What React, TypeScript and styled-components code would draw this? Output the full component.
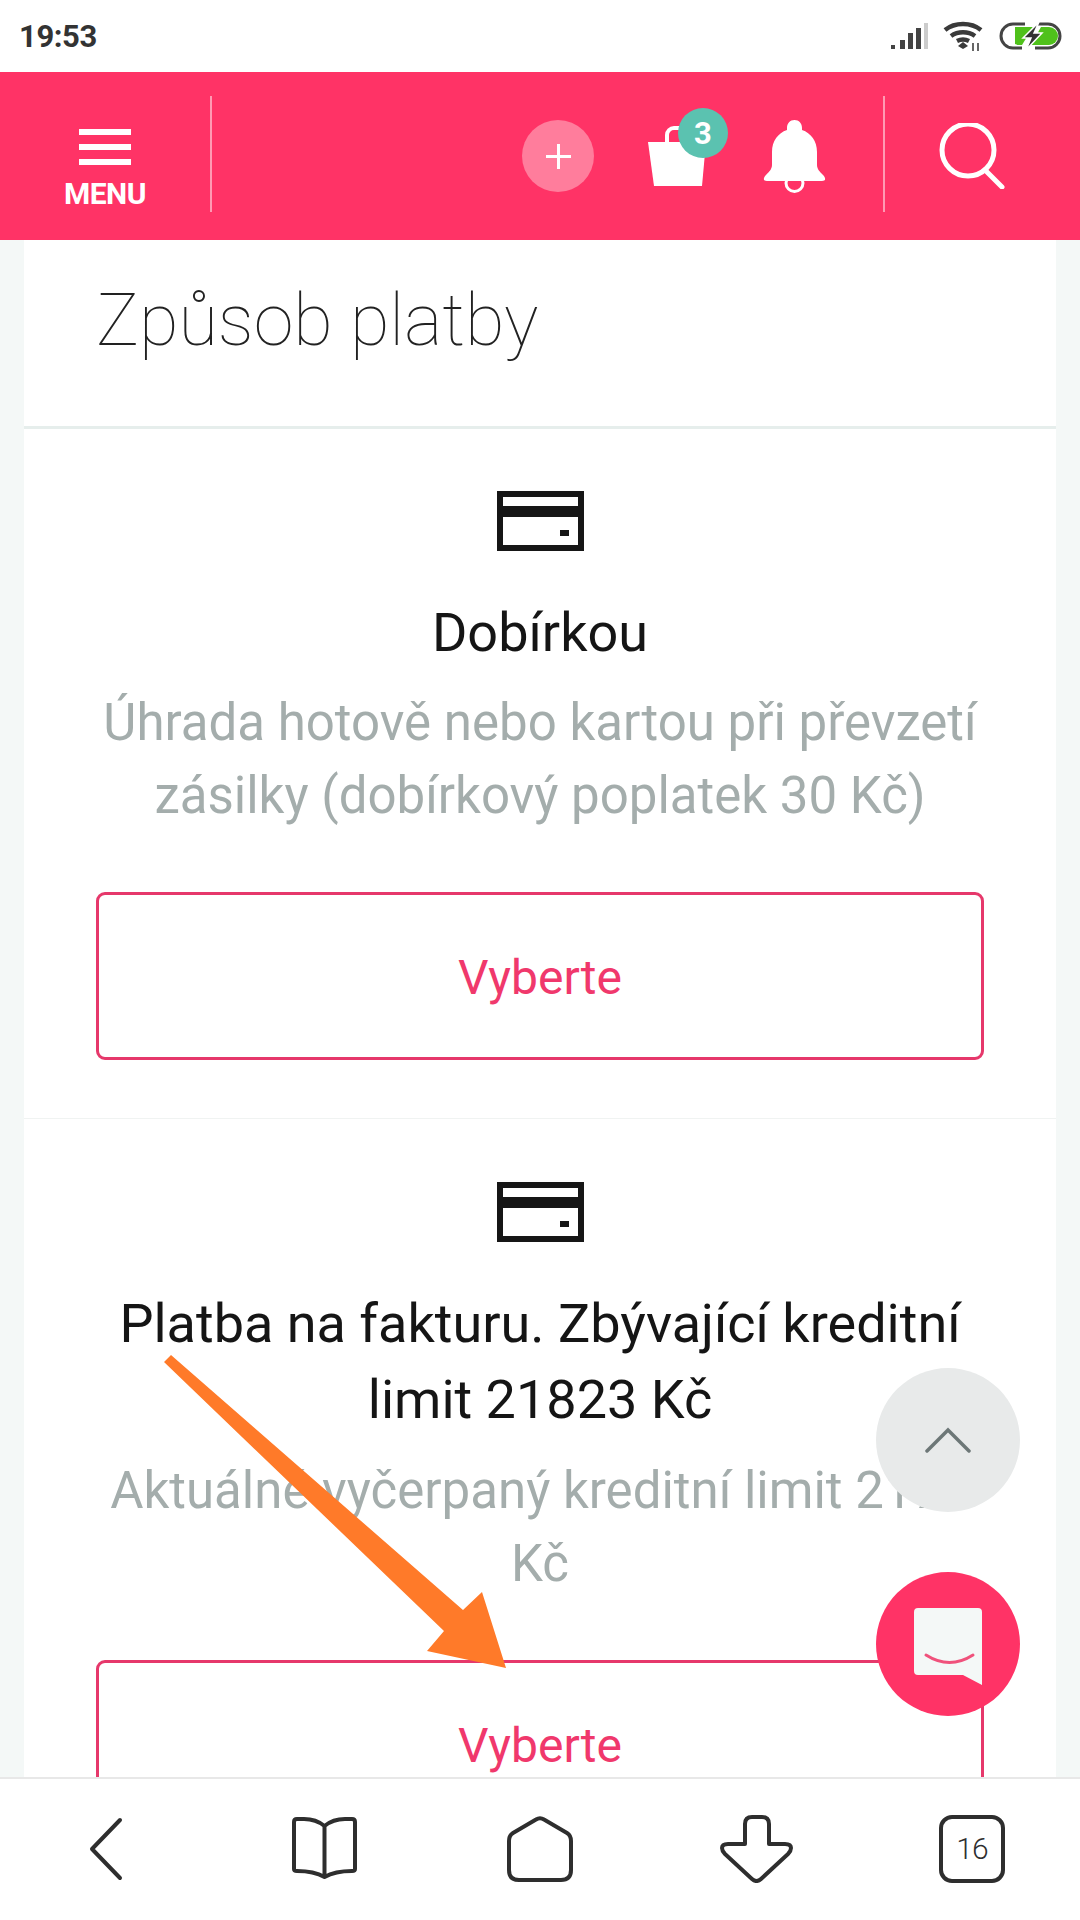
import React from "react";
import styled, { createGlobalStyle } from "styled-components";

const PINK = "#ff3366";

const GlobalStyle = createGlobalStyle`
  html, body { margin: 0; padding: 0; background: #fff; }
  * { box-sizing: border-box; }
  body { font-family: Roboto, "Noto Sans", sans-serif; }
`;

const Screen = styled.div`
  position: relative;
  width: 1080px;
  height: 1920px;
  overflow: hidden;
  display: flex;
  flex-direction: column;
  background: #f4f8f7;
`;

const StatusBar = styled.div`
  height: 72px;
  flex: none;
  background: #fff;
  display: flex;
  align-items: center;
  justify-content: space-between;
  padding: 0 17px 0 19px;
`;

const Clock = styled.span`
  font-size: 31px;
  font-weight: 700;
  color: #333;
  letter-spacing: -0.4px;
`;

const StatusIcons = styled.div`
  display: flex;
  align-items: center;
  gap: 15px;
`;

const Header = styled.header`
  height: 168px;
  flex: none;
  background: ${PINK};
  display: flex;
  align-items: center;
`;

const MenuBox = styled.div`
  width: 212px;
  height: 116px;
  flex: none;
  margin-bottom: 4px;
  border-right: 2px solid rgba(255, 255, 255, 0.5);
  display: flex;
  flex-direction: column;
  align-items: center;
  padding-top: 33px;
`;

const Burger = styled.span`
  display: block;
  width: 52px;
  height: 36px;
  flex: none;
  border-top: 6px solid #fff;
  border-bottom: 6px solid #fff;
  position: relative;
  &::after {
    content: "";
    position: absolute;
    left: 0;
    right: 0;
    top: 9px;
    height: 6px;
    background: #fff;
  }
`;

const MenuLabel = styled.span`
  margin-top: 12px;
  font-size: 30px;
  line-height: 34px;
  font-weight: 700;
  color: #fff;
  letter-spacing: -0.5px;
`;

const HeaderActions = styled.div`
  flex: 1;
  height: 116px;
  display: flex;
  align-items: center;
  padding-left: 310px;
`;

const PlusButton = styled.div`
  width: 72px;
  height: 72px;
  border-radius: 50%;
  background: #ff7d9c;
  display: flex;
  align-items: center;
  justify-content: center;
`;

const BagWrap = styled.div`
  position: relative;
  width: 58px;
  height: 60px;
  margin-left: 54px;
`;

const Badge = styled.span`
  position: absolute;
  left: 30px;
  top: -18px;
  width: 50px;
  height: 50px;
  border-radius: 50%;
  background: #5bc2b0;
  color: #fff;
  font-size: 31px;
  font-weight: 700;
  display: flex;
  align-items: center;
  justify-content: center;
`;

const BellWrap = styled.div`
  margin-left: 57px;
  display: flex;
`;

const SearchBox = styled.div`
  width: 197px;
  height: 116px;
  flex: none;
  margin-bottom: 4px;
  border-left: 2px solid rgba(255, 255, 255, 0.5);
  display: flex;
  align-items: center;
  padding: 4px 0 0 54px;
`;

const Content = styled.main`
  flex: 1;
  min-height: 0;
  overflow: hidden;
  margin: 0 24px;
  background: #fff;
`;

const PageTitle = styled.h1`
  margin: 0;
  height: 189px;
  padding: 36px 0 0 72px;
  border-bottom: 3px solid #e6eeec;
  font-size: 72px;
  line-height: 90px;
  font-weight: 100;
  color: #222;
`;

const Method = styled.section<{ $top: number }>`
  display: flex;
  flex-direction: column;
  align-items: center;
  padding: ${(p) => p.$top}px 72px 58px;
  border-bottom: 1px solid #f0f3f2;
  text-align: center;
`;

const CardIcon = styled.svg`
  display: block;
  flex: none;
`;

const MethodTitle = styled.h2`
  margin: 44px 0 0;
  font-size: 54px;
  line-height: 76px;
  font-weight: 400;
  color: #151515;
`;

const MethodText = styled.p<{ $gap: number }>`
  margin: ${(p) => p.$gap}px 0 0;
  font-size: 51px;
  line-height: 73px;
  font-weight: 400;
  color: #a4adac;
`;

const SelectButton = styled.button`
  margin-top: 60px;
  width: 888px;
  height: 168px;
  flex: none;
  padding: 2px 0 0;
  background: #fff;
  border: 3px solid #e6386b;
  border-radius: 9px;
  font-family: inherit;
  font-size: 48px;
  color: #f0386c;
`;

const BottomBar = styled.nav`
  height: 143px;
  flex: none;
  background: #fff;
  border-top: 2px solid #e8e8e8;
  padding-bottom: 2px;
  display: grid;
  grid-template-columns: repeat(5, 216px);
  align-items: center;
  justify-items: center;
`;

const BackIcon = styled.svg`
  margin-right: 4px;
`;

const FloatButton = styled.div<{ $top: number; $bg: string }>`
  position: absolute;
  left: 876px;
  top: ${(p) => p.$top}px;
  width: 144px;
  height: 144px;
  border-radius: 50%;
  background: ${(p) => p.$bg};
  display: flex;
  align-items: center;
  justify-content: center;
`;

const ChatIcon = styled.svg`
  margin-top: 5px;
`;

const ArrowOverlay = styled.svg`
  position: absolute;
  left: 0;
  top: 0;
  pointer-events: none;
`;

const TabCount = styled.text`
  font-family: Roboto, sans-serif;
  font-size: 30px;
  font-weight: 300;
  letter-spacing: -1px;
  fill: #2e2e2e;
`;

function CreditCard() {
  return (
    <CardIcon width="87" height="60" viewBox="0 0 87 60">
      <path
        fill="#161616"
        fillRule="evenodd"
        d="M0 0h87v60H0zM6 6v9h75V6zM6 26v28h75V26zM63 39h9v6h-9z"
      />
    </CardIcon>
  );
}

export default function App() {
  return (
    <Screen>
      <GlobalStyle />
      <StatusBar>
        <Clock>19:53</Clock>
        <StatusIcons>
          <svg width="38" height="28" viewBox="0 0 38 28">
            <path fill="#444" d="M1 23h4v4H1zM10 18h5v9h-5zM18 11h5v16h-5zM26 6h5v21h-5z" />
            <path fill="#ccc" d="M34 1h4v26h-4z" />
          </svg>
          <svg width="40" height="30" viewBox="0 0 40 30">
            <g fill="none" stroke="#3a3a3a" strokeWidth="4.500">
              <path d="M2 9c10-8 26-8 36 0" />
              <path d="M8 15c7-5 17-5 24 0" />
              <path d="M14 20c4-2 8-2 12 0" />
            </g>
            <path fill="#3a3a3a" d="M20 21l5 4-5 3-5-3z" />
            <path stroke="#666" strokeWidth="2" d="M30 22v8M35 22v8" />
          </svg>
          <svg width="65" height="30" viewBox="0 0 65 30">
            <path
              d="M27 3H15a12 12 0 0 0 0 24h9M40 3h10a12 12 0 0 1 0 24H37"
              fill="none"
              stroke="#444"
              strokeWidth="3"
            />
            <path fill="#4fc11b" d="M17 6h18L24 24h-3a9 9 0 0 1-4-1z" />
            <path fill="#4fc11b" d="M43 6h8a9 9 0 0 1 0 18H33z" />
            <path fill="#333" stroke="#fff" strokeWidth="1.500" d="M41 1 25 17h8l-5 12 16-17h-8z" />
          </svg>
        </StatusIcons>
      </StatusBar>

      <Header>
        <MenuBox>
          <Burger />
          <MenuLabel>MENU</MenuLabel>
        </MenuBox>
        <HeaderActions>
          <PlusButton>
            <svg width="25" height="25" viewBox="0 0 25 25">
              <path fill="#fff" d="M11 0h3v25h-3zM0 11h25v3H0z" />
            </svg>
          </PlusButton>
          <BagWrap>
            <svg width="58" height="60" viewBox="0 0 58 60">
              <path d="M19 18V9a7 7 0 0 1 7-7h10" fill="none" stroke="#fff" strokeWidth="4" />
              <path fill="#fff" d="M0 16h58l-4 44H6z" />
            </svg>
            <Badge>3</Badge>
          </BagWrap>
          <BellWrap>
            <svg width="63" height="73" viewBox="0 0 63 73">
              <circle cx="31.500" cy="63" r="8.500" fill="none" stroke="#fff" strokeWidth="3" />
              <path
                fill="#fff"
                d="M31.500 0C36 0 39 3.500 39 8v2c9 3 15 11 15 22v13c0 4 3 7 6 10s3 6-1 6H4c-4 0-4-3-1-6s6-6 6-10V32c0-11 6-19 15-22V8c0-4.500 3-8 7.500-8z"
              />
            </svg>
          </BellWrap>
        </HeaderActions>
        <SearchBox>
          <svg width="66" height="66" viewBox="0 0 66 66">
            <circle cx="29" cy="27" r="26" fill="none" stroke="#fff" strokeWidth="5" />
            <path d="M46 47l17 17" stroke="#fff" strokeWidth="5" strokeLinecap="round" />
          </svg>
        </SearchBox>
      </Header>

      <Content>
        <PageTitle>Způsob platby</PageTitle>
        <Method $top={62}>
          <CreditCard />
          <MethodTitle>Dobírkou</MethodTitle>
          <MethodText $gap={15}>
            Úhrada hotově nebo kartou při převzetí zásilky (dobírkový poplatek 30 Kč)
          </MethodText>
          <SelectButton>Vyberte</SelectButton>
        </Method>
        <Method $top={63}>
          <CreditCard />
          <MethodTitle>Platba na fakturu. Zbývající kreditní limit 21823 Kč</MethodTitle>
          <MethodText $gap={16}>Aktuálně vyčerpaný kreditní limit 2177 Kč</MethodText>
          <SelectButton>Vyberte</SelectButton>
        </Method>
      </Content>

      <BottomBar>
        <BackIcon width="34" height="64" viewBox="0 0 34 64">
          <path d="M31 3 3 32l28 29" fill="none" stroke="#2e2e2e" strokeWidth="4" strokeLinecap="round" strokeLinejoin="round" />
        </BackIcon>
        <svg width="65" height="63" viewBox="0 0 65 63">
          <path
            d="M32.500 9Q24 2 12 2H5Q2 2 2 5v47q0 2 3 2 17 0 27.500 6Q43 54 60 54q3 0 3-2V5q0-3-3-3h-7Q41 2 32.500 9zM32.500 9v51"
            fill="none"
            stroke="#2e2e2e"
            strokeWidth="4"
            strokeLinejoin="round"
          />
        </svg>
        <svg width="66" height="66" viewBox="0 0 66 66">
          <path
            d="M29 3.500Q33 1 37 3.500L60 17Q64 19.500 64 25v29Q64 64 54 64H12Q2 64 2 54V25Q2 19.500 6 17z"
            fill="none"
            stroke="#2e2e2e"
            strokeWidth="4"
            strokeLinejoin="round"
          />
        </svg>
        <svg width="73" height="68" viewBox="0 0 73 68">
          <path
            d="M25 29V9q0-7 7-7h10q7 0 7 7v20h16q6 0 6 4 0 3-3 6L41 64q-4.500 4-9 0L5 39q-3-3-3-6 0-4 6-4z"
            fill="none"
            stroke="#2e2e2e"
            strokeWidth="4"
            strokeLinejoin="round"
          />
        </svg>
        <svg width="66" height="68" viewBox="0 0 66 68">
          <rect x="2" y="2" width="62" height="64" rx="11" fill="none" stroke="#2e2e2e" strokeWidth="4" />
          <TabCount x="33" y="44" textAnchor="middle">16</TabCount>
        </svg>
      </BottomBar>

      <FloatButton $top={1368} $bg="#e8eaea">
        <svg width="46" height="26" viewBox="0 0 46 26">
          <path d="M2 24 23 3l21 21" fill="none" stroke="#6d7777" strokeWidth="3.500" strokeLinecap="round" />
        </svg>
      </FloatButton>
      <FloatButton $top={1572} $bg={PINK}>
        <ChatIcon width="68" height="77" viewBox="0 0 68 77">
          <path fill="#f4f8f7" d="M4 0h60a4 4 0 0 1 4 4v73L49 67H4a4 4 0 0 1-4-4V4a4 4 0 0 1 4-4z" />
          <path d="M12 47q23.500 15 47 0" fill="none" stroke="#f0527c" strokeWidth="3" strokeLinecap="round" />
        </ChatIcon>
      </FloatButton>

      <ArrowOverlay width="1080" height="1920" viewBox="0 0 1080 1920">
        <polygon
          fill="#ff7a29"
          points="164,1362 171,1355 463,1610 482,1592 506,1668 427,1651 444,1631"
        />
      </ArrowOverlay>
    </Screen>
  );
}
